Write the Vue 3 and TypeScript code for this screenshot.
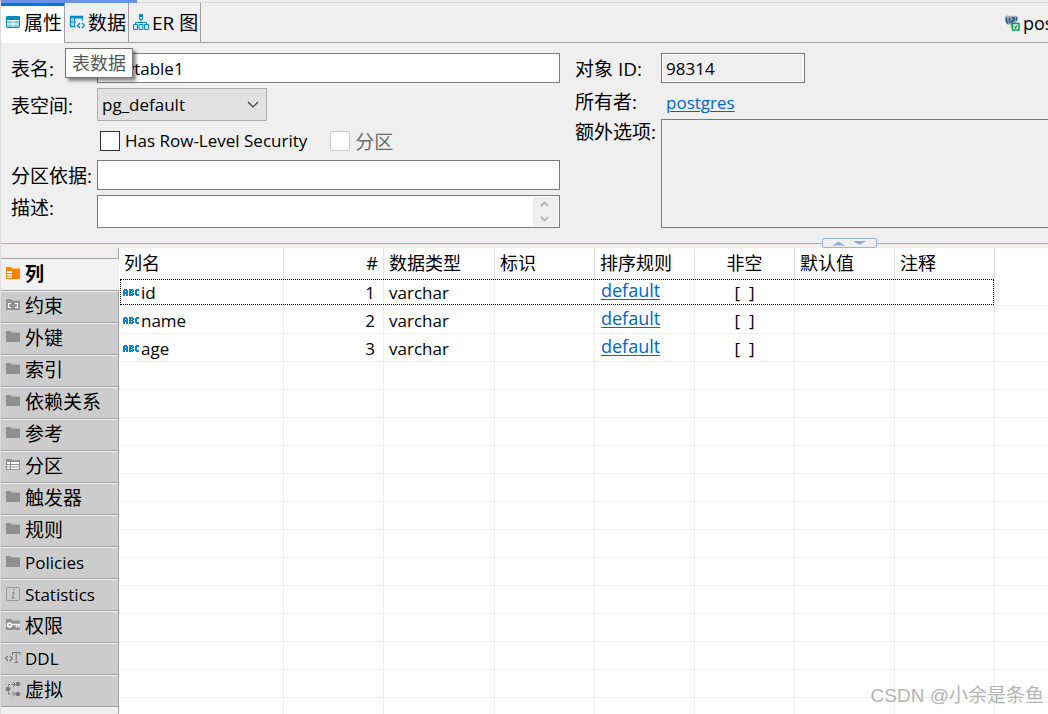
<script setup lang="ts">
import { ref } from 'vue'

interface Section {
  label: string
  icon: string
  latin?: boolean
}

interface Column {
  name: string
  position: number
  type: string
  collation: string
}

const sections: Section[] = [
  { label: '列', icon: 'columns' },
  { label: '约束', icon: 'constraint' },
  { label: '外键', icon: 'folder' },
  { label: '索引', icon: 'folder' },
  { label: '依赖关系', icon: 'folder' },
  { label: '参考', icon: 'folder' },
  { label: '分区', icon: 'partition' },
  { label: '触发器', icon: 'folder' },
  { label: '规则', icon: 'folder' },
  { label: 'Policies', icon: 'folder', latin: true },
  { label: 'Statistics', icon: 'info', latin: true },
  { label: '权限', icon: 'key' },
  { label: 'DDL', icon: 'ddl', latin: true },
  { label: '虚拟', icon: 'virtual' },
]

const columns: Column[] = [
  { name: 'id', position: 1, type: 'varchar', collation: 'default' },
  { name: 'name', position: 2, type: 'varchar', collation: 'default' },
  { name: 'age', position: 3, type: 'varchar', collation: 'default' },
]

const emptyRows = 13
const tableName = ref('newtable1')
const activeSection = ref(0)
const selectedRow = ref(0)
</script>

<template>
  <div class="editor">
    <div class="progress"><span class="progress-fill"></span></div>

    <header class="tabs">
      <button class="tab active" type="button">
        <svg class="tab-icon" width="16" height="16" viewBox="0 0 16 16">
          <rect x="1.5" y="2.5" width="13" height="11" rx="1" fill="#7cc9ea" stroke="#0288c7" />
          <path d="M1 2.500h14V6H1z" fill="#0288c7" />
          <path d="M2 6.500h12M2 10h12M8 6v7" stroke="#fff" stroke-width="1" />
        </svg>
        <span>属性</span>
      </button>
      <div class="tab-wrap">
        <button class="tab" type="button">
          <svg class="tab-icon" width="16" height="16" viewBox="0 0 16 16">
            <path d="M1.500 2.500h12v4M1.500 2.500v10h5" fill="none" stroke="#0288c7" stroke-width="1.300" />
            <path d="M1 2h13v2.500H1z" fill="#0288c7" />
            <path d="M5.500 4v9M2 8h5" stroke="#0288c7" />
            <path d="M2.500 5h2v2h-2zM2.500 9h2v2h-2z" fill="#8ed0ee" />
            <path d="M11 9l-2.500 2.500L11 14M13 9l2.500 2.500L13 14" fill="none" stroke="#0288c7" stroke-width="1.400" />
          </svg>
          <span>数据</span>
        </button>
        <div class="tooltip" role="tooltip">表数据</div>
      </div>
      <button class="tab" type="button">
        <svg class="tab-icon" width="16" height="16" viewBox="0 0 16 16">
          <path d="M8 5v4M2.500 11V8.500h11V11" fill="none" stroke="#0288c7" />
          <path d="M6.500 .500h3v5h-3zM.500 10.500h4v5h-4zM6 10.500h4v5H6zM11.500 10.500h4v5h-4z" fill="#cdeaf7" stroke="#0288c7" />
          <path d="M6.500 1h3v2h-3z" fill="#0288c7" />
        </svg>
        <span>ER 图</span>
      </button>
      <div class="tabs-rest"></div>
      <button class="connection" type="button">
        <svg width="16" height="16" viewBox="0 0 16 16">
          <path d="M1 1.500Q3 0 5.500 1Q8 0 10 1Q13 0 14 2Q14 6 12 8L10 9L9 13H7L6 9L4 10Q0 7 1 1.500z" fill="#9fb0bd" />
          <path d="M2.500 2.500v4l1.500 2M6 2.500Q4.500 5 6 8M8 3h2v2.500H8v4M12.500 2.500v3" fill="none" stroke="#28588a" stroke-width="1.500" />
          <rect x="8.500" y="8.500" width="6.500" height="6.500" fill="#fff" stroke="#0c9d4c" stroke-width="1.500" />
          <path d="M10 11.500l1.500 1.500 2-3" fill="none" stroke="#0c9d4c" stroke-width="1.200" />
        </svg>
        <span>postgres</span>
      </button>
    </header>

    <form class="form" @submit.prevent>
      <div class="fields fields-main">
        <label for="table-name">表名:</label>
        <input id="table-name" v-model="tableName" class="box" type="text" />

        <label for="tablespace">表空间:</label>
        <div class="select-wrap">
          <select id="tablespace" class="select">
            <option>pg_default</option>
          </select>
          <svg class="chevron" width="12" height="8" viewBox="0 0 12 8">
            <path d="M1 1l5 5 5-5" fill="none" stroke="#404040" stroke-width="1.200" />
          </svg>
        </div>

        <div class="checks">
          <label class="check latin"><input type="checkbox" />Has Row-Level Security</label>
          <label class="check disabled"><input type="checkbox" disabled />分区</label>
        </div>

        <label for="partition-by">分区依据:</label>
        <input id="partition-by" class="box" type="text" />

        <label class="top" for="description">描述:</label>
        <div class="area-wrap">
          <textarea id="description" class="box area"></textarea>
          <div class="spinner">
            <svg width="9" height="6" viewBox="0 0 9 6"><path d="M1 5l3.500-3.500L8 5" /></svg>
            <svg width="9" height="6" viewBox="0 0 9 6"><path d="M1 1l3.500 3.500L8 1" /></svg>
          </div>
        </div>
      </div>

      <div class="fields fields-side">
        <label for="object-id">对象 ID:</label>
        <input id="object-id" class="box readonly" type="text" value="98314" readonly />
        <span>所有者:</span>
        <a class="link owner" href="#">postgres</a>
        <label class="top" for="extra">额外选项:</label>
        <textarea id="extra" class="box readonly extra" readonly></textarea>
      </div>
    </form>

    <div class="sash">
      <button class="sash-handle" type="button" aria-label="Resize">
        <svg width="40" height="6" viewBox="0 0 40 6">
          <path d="M2 5.500l6.500-4 6.500 4zM23 1h13l-6.500 4z" fill="#8fb0d0" />
        </svg>
      </button>
    </div>

    <main class="body">
      <nav class="sections">
        <button
          v-for="(section, i) in sections"
          :key="section.label"
          type="button"
          class="section"
          :class="{ current: i === activeSection, latin: section.latin }"
          @click="activeSection = i"
        >
          <svg width="16" height="16" viewBox="0 0 16 16">
            <template v-if="section.icon === 'columns'">
              <path d="M1 2h5l1.500 1.500H15V14H1z" fill="#ff8400" />
              <path d="M2 6h5v2H2zM2 9h5v1.500H2zM2 11.500h5V13H2z" fill="#fff" />
            </template>
            <template v-else-if="section.icon === 'constraint'">
              <path d="M1 2h5l1.500 1.500H15V13H1z" fill="#929292" />
              <path d="M6 6.500H3.500v4H6M10 6.500h2.500v4H10" fill="none" stroke="#fff" stroke-width="1.200" />
            </template>
            <path v-else-if="section.icon === 'folder'" d="M1 2.500Q1 2 1.500 2H5.500L7 3.500H15V13H1z" fill="#8f8f8f" />
            <template v-else-if="section.icon === 'partition'">
              <path d="M1 2h5l1.500 1H15v10H1z" fill="#929292" />
              <path d="M2 5h3v2H2zM6 5h8v2H6zM2 8h3v1.500H2zM6 8h8v1.500H6zM2 10.500h3V12H2zM6 10.500h8V12H6z" fill="#fff" />
            </template>
            <template v-else-if="section.icon === 'info'">
              <rect x="1.500" y="1.500" width="13" height="13" rx="1.500" fill="none" stroke="#999" />
              <path d="M7 6.500h2L7.500 12h2M8.500 3.500h1.500" fill="none" stroke="#929292" stroke-width="1.300" />
            </template>
            <template v-else-if="section.icon === 'key'">
              <path d="M1 2h5l1.500 1.500H15V13H1z" fill="#929292" />
              <circle cx="4.500" cy="8" r="1.900" fill="none" stroke="#fff" stroke-width="1.600" />
              <path d="M6.500 7.500H14v3M11.500 8v2.500" fill="none" stroke="#fff" stroke-width="1.500" />
            </template>
            <template v-else-if="section.icon === 'ddl'">
              <path d="M3 6L.700 8.500 3 11M5 6l2.300 2.500L5 11" fill="none" stroke="#777" stroke-width="1.200" />
              <path d="M7.500 5V2.500h7.500V5M11.200 2.500V12.500M9.500 12.500h3.500" fill="none" stroke="#777" />
            </template>
            <template v-else>
              <path d="M3.500 5.500V3.500H5M6.500 3.500H10M8 1l2.500 2.500L8 6M3.500 10.500v2.500H5M6.500 13H10M8 10.500l2.500 2.500-2.500 2.500" fill="none" stroke="#777" />
              <circle cx="3" cy="8" r="2.300" fill="#777" />
              <circle cx="13" cy="3" r="2.200" fill="#777" />
              <circle cx="13" cy="13" r="2.200" fill="#777" />
            </template>
          </svg>
          <span>{{ section.label }}</span>
        </button>
        <div class="sections-rest"></div>
      </nav>

      <div class="grid-area">
        <table class="grid">
          <colgroup>
            <col class="col-name" />
            <col class="col" />
            <col class="col-type" />
            <col class="col" />
            <col class="col" />
            <col class="col" />
            <col class="col" />
            <col class="col" />
          </colgroup>
          <thead>
            <tr>
              <th>列名</th>
              <th class="num">#</th>
              <th>数据类型</th>
              <th>标识</th>
              <th>排序规则</th>
              <th class="mid">非空</th>
              <th>默认值</th>
              <th>注释</th>
            </tr>
          </thead>
          <tbody>
            <tr
              v-for="(column, i) in columns"
              :key="column.name"
              :class="{ focused: i === selectedRow }"
              @click="selectedRow = i"
            >
              <td class="name">
                <div class="name-cell">
                  <svg width="16" height="9" viewBox="0 0 16 9">
                    <path
                      fill="#0288c7"
                      fill-rule="evenodd"
                      d="M0 8V2H1V1H4V2H5V8H3V6H2V8zM2 3H3V4H2zM6 1H10V2H11V4H10V5H11V7H10V8H6zM8 3H9V4H8zM8 5H9V6H8zM12 2H13V1H16V3H14V6H16V8H13V7H12z"
                    />
                  </svg>
                  <span>{{ column.name }}</span>
                </div>
              </td>
              <td class="num">{{ column.position }}</td>
              <td>{{ column.type }}</td>
              <td></td>
              <td class="collation"><a class="link" href="#">{{ column.collation }}</a></td>
              <td class="mid">[&nbsp;&nbsp;]</td>
              <td></td>
              <td></td>
            </tr>
            <tr v-for="n in emptyRows" :key="n">
              <td v-for="c in 8" :key="c"></td>
            </tr>
          </tbody>
        </table>
      </div>
    </main>

    <div class="watermark">CSDN @小余是条鱼</div>
  </div>
</template>

<style>
body {
  margin: 0;
  overflow: hidden;
}
</style>

<style scoped>
.editor {
  position: relative;
  box-sizing: border-box;
  display: flex;
  flex-direction: column;
  height: 100vh;
  overflow: hidden;
  border-left: 1px solid #dcdcdc;
  background: #efefef;
  color: #000;
  font-family: 'Open Sans', 'Noto Sans CJK SC', sans-serif;
  font-size: 19px;
}

.editor *,
.editor *::before {
  box-sizing: border-box;
}

button,
input,
select,
textarea {
  margin: 0;
  font: inherit;
  color: inherit;
  border-radius: 0;
}

button {
  border: 0;
  padding: 0;
  background: none;
}

.progress {
  flex: none;
  height: 3px;
  border-bottom: 1px solid #d8d8d8;
}

.progress-fill {
  display: block;
  width: 13%;
  height: 3px;
  background: #6a93e8;
}

.tabs {
  flex: none;
  display: flex;
  height: 40px;
  overflow: visible;
  white-space: nowrap;
}

.tab {
  display: flex;
  align-items: center;
  gap: 3px;
  height: 40px;
  padding: 0 2px 1px 4px;
  border-right: 1px solid #a0a0a0;
  border-bottom: 1px solid #a0a0a0;
}

.tab.active {
  border-top: 3px solid #0078d7;
  border-bottom: 0;
  background: #fff;
  padding-bottom: 5px;
}

.tab-icon {
  flex: none;
}

.tab-wrap {
  position: relative;
}

.tooltip {
  position: absolute;
  z-index: 2;
  left: 0;
  top: 45px;
  height: 30px;
  padding: 0 6px;
  border: 1px solid #767676;
  background: #fff;
  color: #575757;
  font-size: 18px;
  line-height: 28px;
  box-shadow: 3px 3px 3px rgba(0, 0, 0, 0.45);
}

.tabs-rest {
  flex: 1;
  border-bottom: 1px solid #a0a0a0;
}

.connection {
  flex: 0 0 44px;
  display: flex;
  align-items: center;
  gap: 3px;
  overflow: hidden;
  border-bottom: 1px solid #a0a0a0;
  font-size: 18px;
}

.connection svg {
  flex: none;
}

.form {
  flex: none;
  display: grid;
  grid-template-columns: minmax(0, 549px) minmax(0, 1fr);
  column-gap: 15px;
  padding: 10px 0 15px 10px;
}

.fields {
  display: grid;
  grid-template-columns: 86px minmax(0, 1fr);
  row-gap: 5px;
  align-items: center;
  white-space: nowrap;
}

.fields-main {
  grid-template-rows: 30px 33px 29px 30px 33px;
}

.fields-side {
  grid-template-rows: 30px 26px 109px;
}

.top {
  align-self: start;
  line-height: 26px;
}

.box {
  display: block;
  width: 100%;
  height: 100%;
  padding: 0 3px;
  border: 1px solid #7a7a7a;
  outline: 0;
  background: #fff;
  font-size: 17px;
}

.readonly {
  width: 144px;
  padding: 0 4px;
  background: #efefef;
  box-shadow: inset 0 0 0 1px #fff;
}

.extra {
  width: 100%;
  border-right: 0;
  box-shadow: none;
  resize: none;
}

.area-wrap {
  position: relative;
  height: 100%;
}

.area {
  resize: none;
  overflow: hidden;
}

.spinner {
  position: absolute;
  top: 2px;
  right: 2px;
  bottom: 2px;
  width: 25px;
  display: flex;
  flex-direction: column;
  align-items: center;
  justify-content: space-between;
  padding: 4px 2px 4px 0;
  background: #efefef;
}

.spinner path {
  fill: none;
  stroke: #b8b8b8;
  stroke-width: 2;
}

.select-wrap {
  position: relative;
  width: 170px;
  height: 100%;
}

.select {
  appearance: none;
  width: 100%;
  height: 100%;
  padding: 0 4px;
  border: 1px solid #adadad;
  background: #e1e1e1;
  font-size: 17px;
}

.chevron {
  position: absolute;
  right: 8px;
  top: 13px;
  pointer-events: none;
}

.checks {
  grid-column: 2;
  display: flex;
  align-items: center;
  gap: 23px;
  padding-left: 3px;
}

.check {
  display: flex;
  align-items: center;
  gap: 5px;
}

.check input {
  appearance: none;
  width: 20px;
  height: 20px;
  border: 1px solid #333;
  background: #fff;
}

.disabled {
  color: #6d6d6d;
}

.disabled input {
  border-color: #ccc;
}

.link {
  color: #0066cc;
  text-decoration: underline;
  text-decoration-thickness: 1px;
  text-underline-offset: 2px;
}

.owner {
  padding: 2px 0 0 5px;
  font-size: 17px;
}

.sash {
  flex: none;
  position: relative;
  height: 5px;
  border-top: 1px solid #99b4d1;
}

.sash-handle {
  position: absolute;
  right: 171px;
  top: -6px;
  display: flex;
  align-items: center;
  justify-content: center;
  width: 55px;
  height: 10px;
  border: 1px solid #99b4d1;
  border-radius: 2px;
  background: #efefef;
}

.body {
  flex: 1;
  display: flex;
  min-height: 0;
  overflow: hidden;
}

.sections {
  flex: 0 0 118px;
  display: flex;
  flex-direction: column;
  padding-top: 10px;
  background: linear-gradient(#a0a0a0, #a0a0a0) right top / 1px 10px no-repeat;
}

.section {
  flex: none;
  display: flex;
  align-items: center;
  gap: 4px;
  height: 32px;
  padding: 0 0 3px 4px;
  border-top: 1px solid #a0a0a0;
  border-right: 1px solid #a0a0a0;
  background: #ccc;
  box-shadow: inset 0 1px #f4f4f4;
  white-space: nowrap;
}

.latin {
  font-size: 17px;
}

.section.latin {
  padding-bottom: 1px;
}

.section svg {
  flex: none;
}

.section.current {
  border-right-color: #f2f2f2;
  background: #f2f2f2;
  font-weight: 700;
}

.sections-rest {
  flex: 1;
  border-top: 1px solid #a0a0a0;
  border-right: 1px solid #a0a0a0;
}

.grid-area {
  flex: 1;
  min-width: 0;
  overflow: hidden;
  background: repeating-linear-gradient(#fff 0 27px, #ededed 27px 28px) 0 30px no-repeat #fff;
}

.grid {
  width: 876px;
  table-layout: fixed;
  border-collapse: separate;
  border-spacing: 0;
}

.col-name {
  width: 165px;
}

.col {
  width: 100px;
}

.col-type {
  width: 111px;
}

th,
td {
  padding: 0 5px;
  border-right: 1px solid #ededed;
  font-weight: 400;
  text-align: left;
  white-space: nowrap;
}

th {
  height: 30px;
  border-right-color: #e2e2e2;
  font-size: 18px;
  line-height: 30px;
}

td {
  height: 28px;
  padding-top: 2px;
  border-bottom: 1px solid #ededed;
  font-size: 17px;
  line-height: 25px;
}

.num {
  text-align: right;
}

td.num {
  padding-right: 8px;
}

.mid {
  text-align: center;
}

td.name {
  padding-left: 4px;
}

.name-cell {
  display: flex;
  align-items: center;
  gap: 2px;
}

td.collation {
  padding-top: 0;
  padding-left: 6px;
  font-size: 18px;
  vertical-align: top;
}

.focused {
  outline: 1px dotted #000;
  outline-offset: -2px;
}

.watermark {
  position: absolute;
  right: 4px;
  bottom: 4px;
  color: #b4b4b4;
  font-family: 'Liberation Sans', 'Noto Sans CJK SC', sans-serif;
  font-size: 19px;
  line-height: 28px;
  white-space: nowrap;
  pointer-events: none;
}
</style>
